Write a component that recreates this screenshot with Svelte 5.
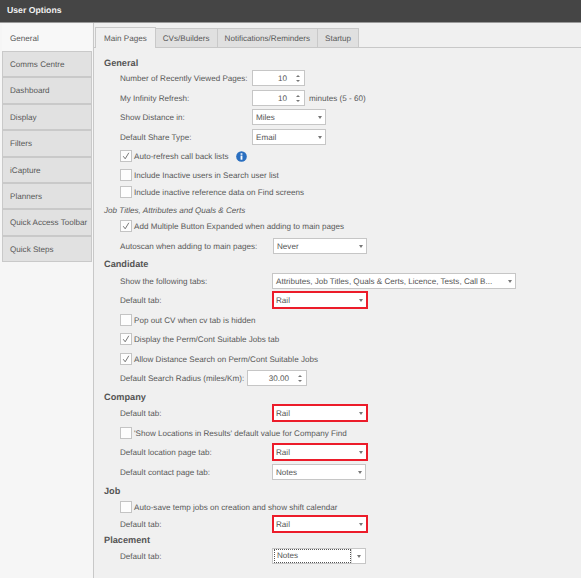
<script>
  const sideItems = ['Comms Centre', 'Dashboard', 'Display', 'Filters', 'iCapture', 'Planners', 'Quick Access Toolbar', 'Quick Steps'];
  const tabs = ['CVs/Builders', 'Notifications/Reminders', 'Startup'];
</script>

{#snippet arrows()}
  <span class="arrows"><i class="up"></i><i class="down"></i></span>
{/snippet}

{#snippet spin(value, cls)}
  <span class="ctl spin {cls}"><span class="val">{value}</span>{@render arrows()}</span>
{/snippet}

{#snippet combo(value, cls)}
  <span class="ctl combo {cls}"><span class="txt">{value}</span><i class="down caret"></i></span>
{/snippet}

{#snippet tick()}
  <svg width="10" height="10" viewBox="0 0 10 10"><path d="M2.2 5.2 4.2 7.8 7.8 1.8" fill="none" stroke="#6a6a6a" stroke-width="0.9"/></svg>
{/snippet}

{#snippet check(label, on, gap)}
  <div class="row check {gap}">
    <span class="box">
      {#if on}{@render tick()}{/if}
    </span>
    <span>{label}</span>
  </div>
{/snippet}

<div class="window">
  <header class="title">User Options</header>
  <div class="body">
    <nav class="side">
      <div class="side-item active">General</div>
      {#each sideItems as item}
        <div class="side-item">{item}</div>
      {/each}
    </nav>
    <main class="main">
      <div class="tabs">
        <div class="tab active">Main Pages</div>
        {#each tabs as tab}
          <div class="tab">{tab}</div>
        {/each}
      </div>
      <div class="form">
        <h3>General</h3>
        <div class="row g0"><label class="short">Number of Recently Viewed Pages:</label>{@render spin('10', 'w53')}</div>
        <div class="row g4"><label class="short">My Infinity Refresh:</label>{@render spin('10', 'w53')}<span class="after">minutes (5 - 60)</span></div>
        <div class="row"><label class="short">Show Distance in:</label>{@render combo('Miles', 'w74')}</div>
        <div class="row g4"><label class="short">Default Share Type:</label>{@render combo('Email', 'w74')}</div>
        <div class="row check">
          <span class="box">{@render tick()}</span>
          <span>Auto-refresh call back lists</span>
          <svg class="info" width="11" height="11" viewBox="0 0 12 12"><circle cx="6" cy="6" r="5.8" fill="#2a6fc0"/><rect x="5" y="5" width="2" height="4.5" fill="#fff"/><rect x="5" y="2.5" width="2" height="1.6" fill="#fff"/></svg>
        </div>
        {@render check('Include Inactive users in Search user list', false, '')}
        {@render check('Include inactive reference data on Find screens', false, 'g1')}
        <div class="row g2 sub">Job Titles, Attributes and Quals &amp; Certs</div>
        {@render check('Add Multiple Button Expanded when adding to main pages', true, 'g0')}
        <div class="row g4"><label>Autoscan when adding to main pages:</label>{@render combo('Never', 'w93 nudge')}</div>

        <h3 class="g1">Candidate</h3>
        <div class="row g2"><label>Show the following tabs:</label>{@render combo('Attributes, Job Titles, Quals & Certs, Licence, Tests, Call B...', 'w244')}</div>
        <div class="row"><label>Default tab:</label>{@render combo('Rail', 'w93 red')}</div>
        {@render check('Pop out CV when cv tab is hidden', false, 'g4')}
        {@render check('Display the Perm/Cont Suitable Jobs tab', true, '')}
        {@render check('Allow Distance Search on Perm/Cont Suitable Jobs', true, 'g4')}
        <div class="row"><label class="radius">Default Search Radius (miles/Km):</label>{@render spin('30.00', 'w60')}</div>

        <h3 class="g2">Company</h3>
        <div class="row g1"><label>Default tab:</label>{@render combo('Rail', 'w93 red')}</div>
        {@render check("'Show Locations in Results' default value for Company Find", false, 'g4')}
        <div class="row"><label>Default location page tab:</label>{@render combo('Rail', 'w93 red')}</div>
        <div class="row g4"><label>Default contact page tab:</label>{@render combo('Notes', 'w93')}</div>

        <h3 class="g2">Job</h3>
        {@render check('Auto-save temp jobs on creation and show shift calendar', false, 'g1')}
        <div class="row g1"><label>Default tab:</label>{@render combo('Rail', 'w93 red')}</div>

        <h3 class="gn">Placement</h3>
        <div class="row g1"><label>Default tab:</label>
          <span class="ctl combo w93 focus"><span class="txt">Notes</span><span class="drop"><i class="down caret"></i></span></span>
        </div>
      </div>
    </main>
  </div>
</div>

<style>
  :global(body) {
    margin: 0;
    background: #fff;
  }

  .window {
    width: 581px;
    height: 578px;
    display: flex;
    flex-direction: column;
    overflow: hidden;
    font-family: "Liberation Sans", Arial, sans-serif;
    font-size: 8.1px;
    text-rendering: geometricPrecision;
    color: #585858;
    background: #f4f4f4;
  }

  .title {
    height: 22px;
    line-height: 21px;
    padding-left: 7px;
    background: #454545;
    border-bottom: 1px solid #9a9a9a;
    font-weight: bold;
    font-size: 8.7px;
    color: #f2f2f2;
    flex: none;
  }

  .body {
    flex: 1;
    display: flex;
    min-height: 0;
  }

  .side {
    width: 94px;
    flex: none;
    padding: 1px 1px 0 2px;
    box-sizing: border-box;
    background: #f6f6f6;
    border-right: 1px solid #c8c8c8;
  }

  .side-item {
    height: 26.4px;
    box-sizing: border-box;
    line-height: 26px;
    padding-left: 7px;
    background: #e1e1e1;
    border: 1px solid #c9c9c9;
    white-space: nowrap;
  }

  .side-item.active {
    height: 27px;
    background: #f8f8f8;
    border-color: #f8f8f8;
    padding-left: 7px;
    line-height: 28px;
  }

  .main {
    flex: 1;
    min-width: 0;
    background: #f0f0f0;
    padding-top: 4px;
  }

  .tabs {
    display: flex;
    height: 20px;
    padding-left: 1px;
    border-bottom: 1px solid #c8c8c8;
  }

  .tab {
    box-sizing: border-box;
    height: 19px;
    margin-top: 1px;
    line-height: 20px;
    padding: 0 7px;
    background: #e0e0e0;
    border: 1px solid #c9c9c9;
    border-bottom: none;
    border-left: none;
  }

  .tab.active {
    height: 21px;
    margin-top: 0;
    padding: 0 8px;
    background: #f0f0f0;
    border-left: 1px solid #c9c9c9;
    line-height: 22px;
  }

  .form {
    padding: 6px 0 0 10px;
  }

  h3 {
    margin: 0;
    height: 16px;
    line-height: 18px;
    font-size: 9.2px;
    font-weight: bold;
    color: #555;
  }

  .row {
    display: flex;
    align-items: center;
    height: 16px;
    padding-left: 16px;
    margin-top: 3px;
    white-space: nowrap;
  }

  .g0 { margin-top: 0; }
  .g1 { margin-top: 1px; }
  .g2 { margin-top: 2px; }
  .g4 { margin-top: 4px; }
  .gn { margin-top: -1px; }

  .sub {
    padding-left: 0;
    font-style: italic;
  }

  label {
    width: 152px;
    flex: none;
  }

  label.short {
    width: 132px;
  }

  label.radius {
    width: 127px;
  }

  .check {
    gap: 2px;
  }

  .box {
    width: 12px;
    height: 12px;
    box-sizing: border-box;
    flex: none;
    display: flex;
    align-items: center;
    justify-content: center;
    background: #fdfdfd;
    border: 1px solid #c4c4c4;
  }

  .info {
    margin-left: 6px;
  }

  .ctl {
    display: flex;
    align-items: center;
    box-sizing: border-box;
    height: 16px;
    background: #fff;
    border: 1px solid #c6c6c6;
    color: #555;
    flex: none;
  }

  .w53 { width: 53px; }
  .w60 { width: 60px; }
  .w74 { width: 74px; }
  .w93 { width: 94px; }
  .w244 { width: 244px; }

  .combo {
    padding: 0 3px 0 3px;
    justify-content: space-between;
  }

  .nudge {
    margin-left: 1px;
  }

  .spin .val {
    flex: 1;
    text-align: right;
    padding-right: 5px;
  }

  .arrows {
    width: 11px;
    margin-right: 1px;
    display: flex;
    flex-direction: column;
    align-items: center;
    gap: 3px;
  }

  .up, .down {
    display: block;
    width: 0;
    height: 0;
    border-left: 2.5px solid transparent;
    border-right: 2.5px solid transparent;
  }

  .up { border-bottom: 2.5px solid #777; }
  .down { border-top: 2.5px solid #777; }
  .caret { border-top-width: 3px; }

  .red {
    width: 92px;
    height: 14px;
    margin-left: 2px;
    padding-left: 1px;
    padding-right: 2px;
    outline: 2px solid #ec1c2a;
    border-color: #fff;
  }

  .focus {
    padding: 0;
  }

  .focus .txt {
    flex: 1;
    padding-left: 2px;
    line-height: 12px;
    margin-left: 1px;
    border: 1px dotted #555;
  }

  .drop {
    width: 13px;
    align-self: stretch;
    display: flex;
    align-items: center;
    justify-content: center;
    border-left: 1px solid #ddd;
  }

  .after {
    margin-left: 4px;
  }
</style>
